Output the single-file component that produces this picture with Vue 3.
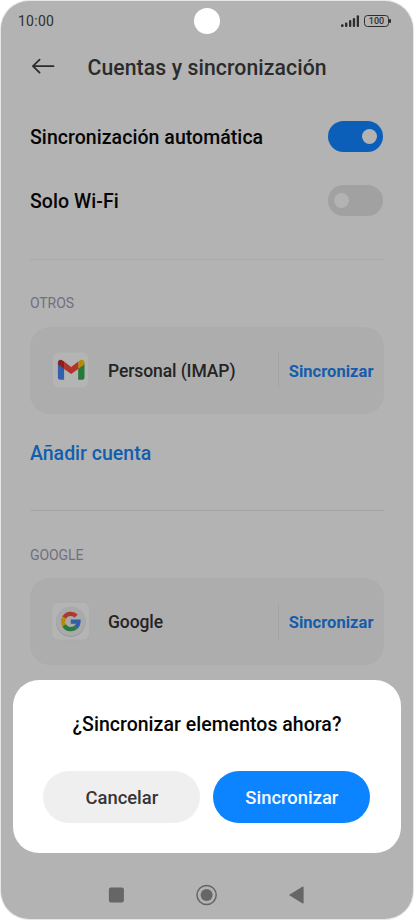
<script setup>
const switches = [
  { label: 'Sincronización automática', on: true, cls: 'auto' },
  { label: 'Solo Wi-Fi', on: false, cls: 'wifi' },
]
</script>

<template>
  <div class="stage">
    <div class="phone">
      <div class="status">
        <span class="clock">10:00</span>
        <div class="indicators">
          <svg class="signal" width="20" height="14" viewBox="0 0 20 14" fill="#2d2d2d">
            <rect x="1" y="10.3" width="2.6" height="2.7" rx="1" />
            <rect x="5" y="8.4" width="2.4" height="4.6" rx="1" />
            <rect x="9" y="6.1" width="2.3" height="6.9" rx="1" />
            <rect x="12.8" y="3.9" width="2.3" height="9.1" rx="1" />
            <rect x="16.7" y="1.2" width="2.3" height="11.8" rx="1" />
          </svg>
          <span class="battery"><span class="level">100</span></span>
        </div>
      </div>

      <header class="header">
        <svg class="back" width="24" height="18" viewBox="0 0 24 18" fill="none" stroke="#2d2d2d" stroke-width="1.8" stroke-linecap="round" stroke-linejoin="round">
          <path d="M8.6 1.7 1.9 8.2l6.7 6.5M2.1 8.2h20.4" />
        </svg>
        <h1 class="title">Cuentas y sincronización</h1>
      </header>

      <div class="switches">
        <div v-for="s in switches" :key="s.cls" class="row">
          <span class="row-label" :class="s.cls">{{ s.label }}</span>
          <span class="switch" :class="{ on: s.on }"><span class="knob"></span></span>
        </div>
      </div>

      <section class="group">
        <h2 class="group-title">OTROS</h2>
        <div class="card">
          <svg class="app-icon" width="40" height="40" viewBox="0 0 40 40">
            <rect x="3" y="2.5" width="35" height="35" rx="6" fill="#b4b4b4" />
            <g transform="translate(.4 .3)">
              <path d="M7.5 13v14.5c0 1.1.8 1.9 1.9 1.9h4.3V17.5z" fill="#3260ad" />
              <path d="M27.8 17.5v11.9h4.4c1.1 0 1.9-.8 1.9-1.9V13z" fill="#26783b" />
              <path d="M27.8 11.3v7.3l6.3-4.7v-1.5c0-2.7-2.8-3.7-4.7-2.2z" fill="#b98a06" />
              <path d="M13.7 18.6v-7.3l7.1 5.3 7-5.3v7.3l-7 5.2z" fill="#b1352b" />
              <path d="M7.5 12.4v1.5l6.2 4.7v-7.3l-1.6-1.1c-1.9-1.5-4.6-.5-4.6 2.2z" fill="#8a211c" />
            </g>
          </svg>
          <span class="account">Personal (IMAP)</span>
          <span class="sync">Sincronizar</span>
        </div>
        <a class="add">Añadir cuenta</a>
      </section>

      <section class="group">
        <h2 class="group-title lower">GOOGLE</h2>
        <div class="card">
          <svg class="app-icon" width="40" height="40" viewBox="0 0 40 40">
            <rect x="1.7" y="1.2" width="38" height="38" rx="7" fill="#b4b4b4" stroke="#a9a9a9" stroke-width=".7" />
            <circle cx="20.8" cy="21" r="14.8" fill="#949494" />
            <circle cx="20.8" cy="20.2" r="14.8" fill="#aaa" />
            <g fill="none" stroke-width="4.2">
              <path d="M14.13 16.65A7.7 7.7 0 0 1 26.24 15.06" stroke="#ac3a31" />
              <path d="M14.13 24.35A7.7 7.7 0 0 1 14.13 16.65" stroke="#b88b09" />
              <path d="M25.75 26.4A7.7 7.7 0 0 1 14.13 24.35" stroke="#287b3d" />
              <path d="M20.8 20.7h7.7a7.7 7.7 0 0 1-2.75 5.7" stroke="#315fa8" />
            </g>
          </svg>
          <span class="account">Google</span>
          <span class="sync">Sincronizar</span>
        </div>
      </section>

      <nav class="nav">
        <svg width="24" height="24" viewBox="0 0 24 24"><rect x="3.9" y="4.5" width="15" height="15" rx="2" fill="#666" /></svg>
        <svg width="24" height="24" viewBox="0 0 24 24"><circle cx="11.6" cy="12" r="9.6" fill="none" stroke="#666" stroke-width="1.5" /><circle cx="11.6" cy="12" r="6" fill="#666" /></svg>
        <svg width="24" height="24" viewBox="0 0 24 24"><path d="M4.7 11.4 17.3 3.8q1.3-.7 1.3.7v15q0 1.4-1.3.7L4.7 12.6q-.9-.6 0-1.2z" fill="#666" /></svg>
      </nav>

      <span class="camera"></span>

      <div class="dialog" role="dialog">
        <p class="question">¿Sincronizar elementos ahora?</p>
        <div class="actions">
          <button class="btn cancel"><span>Cancelar</span></button>
          <button class="btn confirm"><span>Sincronizar</span></button>
        </div>
      </div>
    </div>
  </div>
</template>

<style>
body {
  background: #fff;
}
</style>

<style scoped>
.stage {
  width: 414px;
  height: 920px;
  padding: 1px;
  box-sizing: border-box;
  font-family: Roboto, sans-serif;
}
.phone {
  position: relative;
  width: 412px;
  height: 918px;
  border-radius: 28px;
  background: #b3b3b3;
  box-shadow: 0 0 0 1px #e5e8e7;
  overflow: hidden;
  display: flex;
  flex-direction: column;
}
.status {
  height: 40px;
  display: flex;
  align-items: center;
  justify-content: space-between;
  padding: 0 24px 0 17px;
}
.clock {
  font-size: 14px;
  color: #303030;
  letter-spacing: 0.25px;
}
.indicators {
  display: flex;
  align-items: center;
  gap: 4px;
}
.battery {
  position: relative;
  width: 25px;
  height: 12px;
  box-sizing: border-box;
  border: 1px solid #2d2d2d;
  border-radius: 3.5px;
  display: flex;
  align-items: center;
  justify-content: center;
}
.battery::after {
  content: '';
  position: absolute;
  right: -3px;
  top: 3px;
  width: 2px;
  height: 4px;
  border-radius: 1px;
  background: #2d2d2d;
}
.level {
  font-size: 9px;
  line-height: 10px;
  font-weight: 500;
  color: #303030;
}
.header {
  height: 52px;
  display: flex;
  align-items: center;
  padding-left: 30px;
}
.title {
  margin: 1px 0 0 32.5px;
  font-size: 21.2px;
  line-height: 27px;
  font-weight: 500;
  letter-spacing: 0.09px;
  color: #2b2b2b;
}
.switches {
  margin: 12px 29px 0;
  padding-bottom: 26px;
  border-bottom: 1px solid #a8a8a8;
}
.row {
  height: 64px;
  display: flex;
  align-items: center;
  justify-content: space-between;
}
.row-label {
  font-size: 19.5px;
  font-weight: 500;
  letter-spacing: 0.05px;
  color: #050505;
}
.switch {
  width: 55px;
  height: 31px;
  padding: 0 6px;
  margin: -1px 1px 0 0;
  box-sizing: border-box;
  border-radius: 16px;
  background: #a1a1a1;
  display: flex;
  align-items: center;
}
.switch.on {
  background: #0b5fb8;
  justify-content: flex-end;
}
.knob {
  width: 15px;
  height: 15px;
  border-radius: 50%;
  background: #b3b3b3;
}
.group {
  margin: 0 29px;
}
.group-title {
  margin: 0;
  padding: 34px 0 14.5px;
  font-size: 14px;
  line-height: 18px;
  font-weight: 400;
  letter-spacing: -0.1px;
  color: #707080;
}
.group-title.lower {
  padding: 35px 0 13.5px;
}
.card {
  height: 87px;
  border-radius: 20px;
  background: #adadad;
  display: flex;
  align-items: center;
}
.app-icon {
  margin-left: 20px;
}
.account {
  margin: 2px 0 0 18px;
  font-size: 17.5px;
  font-weight: 500;
  letter-spacing: -0.1px;
  color: #242424;
}
.sync {
  width: 106px;
  height: 36px;
  margin-left: auto;
  padding: 2px 0 0 9.7px;
  box-sizing: border-box;
  border-left: 1px solid #a3a3a3;
  display: flex;
  align-items: center;
  font-size: 16.5px;
  font-weight: 700;
  letter-spacing: 0.04px;
  color: #165cac;
}
.add {
  height: 97.5px;
  padding-top: 27px;
  box-sizing: border-box;
  display: block;
  border-bottom: 1px solid #a4a4a4;
  font-size: 19.5px;
  line-height: 26px;
  font-weight: 500;
  color: #105fae;
}
.nav {
  margin-top: auto;
  height: 48px;
  display: flex;
  align-items: center;
  justify-content: center;
  gap: 66px;
}
.camera {
  position: absolute;
  left: 193px;
  top: 7px;
  width: 26px;
  height: 26px;
  border-radius: 50%;
  background: #fff;
}
.dialog {
  position: absolute;
  left: 12.4px;
  right: 12.4px;
  top: 679px;
  height: 173px;
  border-radius: 26px;
  background: #fff;
}
.question {
  margin: 32px 0 0;
  font-size: 19.5px;
  line-height: 26px;
  font-weight: 500;
  letter-spacing: 0.02px;
  text-align: center;
  color: #050505;
}
.actions {
  display: flex;
  gap: 13px;
  margin: 33px 30.3px 0 30px;
}
.btn {
  flex: 1;
  height: 52px;
  border: 0;
  padding: 1px 0 0;
  border-radius: 26px;
  font-family: inherit;
  font-size: 18.4px;
  font-weight: 500;
}
.cancel {
  background: #efefef;
  color: #363636;
}
.confirm {
  background: #0d84ff;
  color: #f4f9ff;
}
</style>
